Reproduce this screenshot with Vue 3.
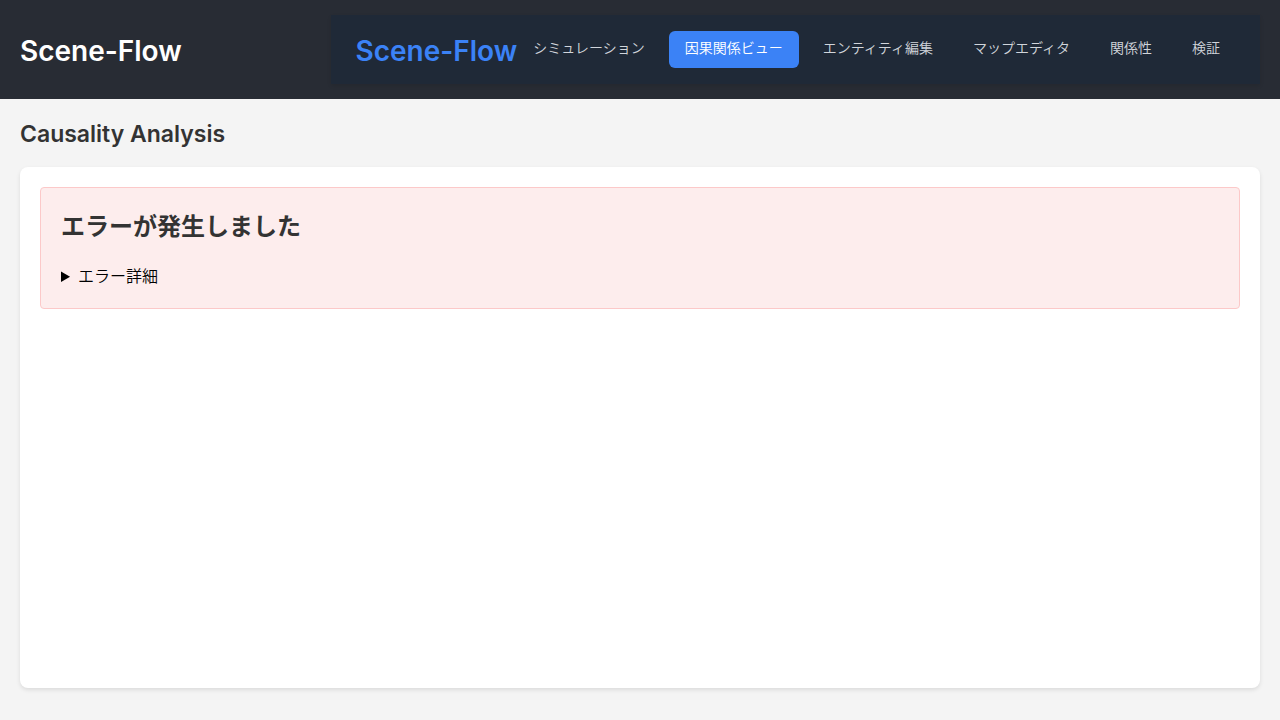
<script setup>
import { ref } from 'vue'

const links = ['シミュレーション', '因果関係ビュー', 'エンティティ編集', 'マップエディタ', '関係性', '検証']
const active = ref(1)
</script>

<template>
  <div class="app">
    <header class="header">
      <h1 class="title">Scene-Flow</h1>
      <nav class="nav">
        <h1 class="brand">Scene-Flow</h1>
        <div class="links">
          <a
            v-for="(label, i) in links"
            :key="label"
            href="#"
            class="link"
            :class="{ active: i === active }"
            @click.prevent="active = i"
          >{{ label }}</a>
        </div>
      </nav>
    </header>
    <main class="main">
      <h2 class="heading">Causality Analysis</h2>
      <section class="card">
        <div class="error">
          <h2 class="error-title">エラーが発生しました</h2>
          <details>
            <summary>エラー詳細</summary>
          </details>
        </div>
      </section>
    </main>
  </div>
</template>

<style>
body {
  background: #f4f4f4;
}
</style>

<style scoped>
.app {
  display: flex;
  flex-direction: column;
  min-height: 100vh;
  box-sizing: border-box;
  font-family: Inter, "Noto Sans CJK JP", sans-serif;
  font-size: 16px;
  line-height: 24px;
  color: #333;
}
.header {
  display: flex;
  justify-content: space-between;
  align-items: center;
  padding: 15px 20px;
  background: #282c34;
}
.title,
.brand {
  margin: 0;
  padding-top: 2px;
  font-size: 28px;
  line-height: 34px;
  font-weight: 600;
  color: #fff;
}
.nav {
  display: flex;
  align-items: center;
  padding: 16px 24px;
  background: #1f2937;
  box-shadow: 0 2px 4px rgba(0, 0, 0, 0.1);
}
.brand {
  color: #3b82f6;
}
.links {
  display: flex;
  gap: 8px;
}
.link {
  padding: 6px 16px 10px;
  border-radius: 6px;
  font-size: 14px;
  font-weight: 350;
  line-height: 21px;
  color: #d1d5db;
  text-decoration: none;
}
.link.active {
  background: #3b82f6;
  color: #fff;
}
.main {
  display: flex;
  flex: 1;
  flex-direction: column;
  padding: 20px 20px 32px;
}
.heading {
  margin: 0 0 18px;
  font-size: 23px;
  line-height: 30px;
  font-weight: 600;
}
.card {
  flex: 1;
  padding: 20px;
  border-radius: 8px;
  background: #fff;
  box-shadow: 0 2px 4px rgba(0, 0, 0, 0.1);
}
.error {
  padding: 20px;
  border: 1px solid #fcc9c9;
  border-radius: 4px;
  background: #fdeded;
}
.error-title {
  margin: 0 0 18px;
  font-size: 24px;
  line-height: 38px;
  font-weight: 600;
}
summary {
  color: #000;
  font-weight: 350;
  cursor: pointer;
}
</style>
